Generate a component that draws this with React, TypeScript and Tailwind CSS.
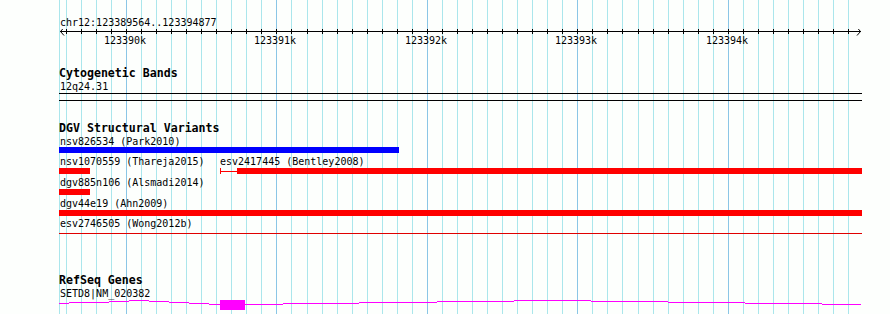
const LINES = Array.from({ length: 53 }, (_, i) => Math.floor(66.3 + i * 15.045))
const MAJOR = [4, 14, 24, 34, 44]
const LEFT = 59

const GENE_SEGMENTS: [number, number, number][] = [
  [59, 69, 302], [69, 109, 301], [109, 129, 300], [129, 149, 299], [149, 169, 300],
  [169, 189, 301], [189, 209, 302], [209, 220, 303], [245, 283, 303], [283, 359, 302],
  [359, 437, 301], [437, 514, 300], [514, 591, 299], [591, 668, 300], [668, 745, 301],
  [745, 822, 302], [822, 861, 303],
]

const mono = "font-['DejaVu_Sans_Mono',monospace]"

function Grid() {
  return (
    <svg className="absolute inset-0" width={890} height={314} shapeRendering="crispEdges">
      <line x1={59.5} x2={59.5} y1={0} y2={314} stroke="#aae6ec" />
      {LINES.map((x, i) => (
        <line
          key={i}
          x1={x + 0.5}
          x2={x + 0.5}
          y1={0}
          y2={314}
          stroke={MAJOR.includes(i) ? '#8ac6e6' : '#aae6ec'}
        />
      ))}
    </svg>
  )
}

function Ruler() {
  return (
    <svg width={803} height={20} shapeRendering="crispEdges" className="block">
      <line x1={1} x2={802} y1={2.5} y2={2.5} stroke="#000" />
      <polyline points="5,-1.5 1.5,2.5 5,6.5" fill="none" stroke="#000" shapeRendering="auto" />
      <polyline points="798,-1.5 801.5,2.5 798,6.5" fill="none" stroke="#000" shapeRendering="auto" />
      {LINES.map((x, i) => (
        <line key={i} x1={x - LEFT + 0.5} x2={x - LEFT + 0.5} y1={0} y2={5} stroke="#000" />
      ))}
      {MAJOR.map((i, k) => (
        <text
          key={i}
          x={LINES[i] - LEFT - 22}
          y={15}
          fontSize={10}
          fontFamily="'DejaVu Sans Mono', monospace"
          fill="#000"
        >
          {`12339${k}k`}
        </text>
      ))}
    </svg>
  )
}

function Label({ children, className = '' }: { children: React.ReactNode; className?: string }) {
  return (
    <div className={`h-[12px] pl-[1px] text-[10px] leading-[13px] text-black whitespace-pre ${mono} ${className}`}>
      {children}
    </div>
  )
}

function Heading({ children, className = '' }: { children: React.ReactNode; className?: string }) {
  return (
    <div className={`h-[13px] text-[11.6px] leading-[13px] font-bold text-black whitespace-pre ${mono} ${className}`}>
      {children}
    </div>
  )
}

function Bar({ x0, x1, color }: { x0: number; x1: number; color: string }) {
  return <rect x={x0 - LEFT} y={0} width={x1 - x0} height={6} fill={color} />
}

function GeneModel() {
  return (
    <svg width={803} height={12} shapeRendering="crispEdges" className="block">
      {GENE_SEGMENTS.map(([a, b, y], i) => (
        <rect key={i} x={a - LEFT} y={y - 298} width={b - a} height={1} fill="#ff00ff" />
      ))}
      <rect x={220 - LEFT} y={1} width={25} height={10} fill="#ff00ff" />
    </svg>
  )
}

export default function App() {
  return (
    <div className="relative w-[890px] h-[314px] overflow-hidden bg-[#fdfffd]">
      <Grid />
      <div className="relative ml-[59px] w-[803px] flex flex-col pt-[16px]">
        <div className={`h-[13px] pl-[1px] text-[10px] leading-[13px] text-black ${mono}`}>
          chr12:123389564..123394877
        </div>
        <Ruler />

        <Heading className="mt-[18px]">Cytogenetic Bands</Heading>
        <Label className="h-[13px]">12q24.31</Label>
        <div className="h-px bg-black" />
        <div className="h-px bg-black mt-[6px]" />

        <Heading className="mt-[21px]">DGV Structural Variants</Heading>
        <Label>nsv826534 (Park2010)</Label>
        <svg width={803} height={6} className="block" shapeRendering="crispEdges">
          <Bar x0={59} x1={399} color="#0000ff" />
        </svg>

        <Label className="mt-[2px] flex">
          <span className="w-[160px]">nsv1070559 (Thareja2015)</span>
          <span>esv2417445 (Bentley2008)</span>
        </Label>
        <svg width={803} height={6} className="block mt-[1px]" shapeRendering="crispEdges">
          <Bar x0={59} x1={90} color="#ff0000" />
          <rect x={220 - LEFT} y={0} width={1} height={6} fill="#ff0000" />
          <rect x={220 - LEFT} y={3} width={17} height={1} fill="#ff0000" />
          <Bar x0={237} x1={862} color="#ff0000" />
        </svg>

        <Label className="mt-[2px]">dgv885n106 (Alsmadi2014)</Label>
        <svg width={803} height={6} className="block mt-[1px]" shapeRendering="crispEdges">
          <Bar x0={59} x1={90} color="#ff0000" />
        </svg>

        <Label className="mt-[2px]">dgv44e19 (Ahn2009)</Label>
        <svg width={803} height={6} className="block mt-[1px]" shapeRendering="crispEdges">
          <Bar x0={59} x1={862} color="#ff0000" />
        </svg>

        <Label className="mt-[1px]">esv2746505 (Wong2012b)</Label>
        <div className="h-px bg-[#e00000] mt-[4px]" />

        <Heading className="mt-[40px] h-[12px]">RefSeq Genes</Heading>
        <Label>SETD8|NM_020382</Label>
        <GeneModel />
      </div>
    </div>
  )
}
